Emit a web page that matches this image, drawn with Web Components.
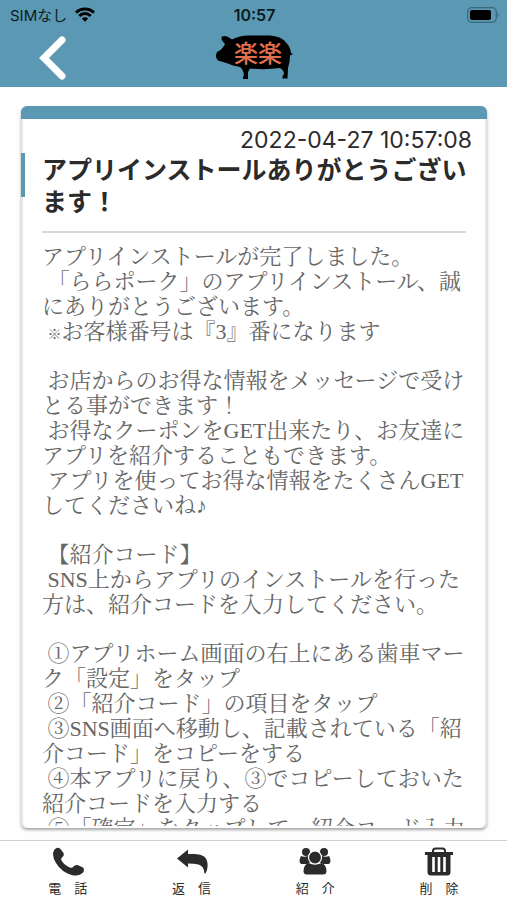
<!DOCTYPE html>
<html lang="ja">
<head>
<meta charset="utf-8">
<meta name="viewport" content="width=device-width, initial-scale=1">
<title>楽楽</title>
<style>
    body {
        margin: 0;
        background: #fefefe;
        color: #2b2b2b;
        font-family: Inter, "Noto Sans CJK JP", sans-serif;
    }

    small {
        font-size: 14px;
        line-height: 1;
    }
</style>
</head>
<body>
<app-shell>
    <status-bar slot="top" carrier="SIMなし" time="10:57"></status-bar>
    <app-bar slot="top" name="楽楽"></app-bar>
    <message-card date="2022-04-27 10:57:08">
        <span slot="title">アプリインストールありがとうございます！</span>
        <p class="joined">アプリインストールが完了しました。
 「ららポーク」のアプリインストール、誠にありがとうございます。</p>
        <p> <small>※</small>お客様番号は『3』番になります</p>
        <p> お店からのお得な情報をメッセージで受けとる事ができます！
 お得なクーポンをGET出来たり、お友達にアプリを紹介することもできます。
 アプリを使ってお得な情報をたくさんGETしてくださいね♪</p>
        <p> 【紹介コード】
 SNS上からアプリのインストールを行った方は、紹介コードを入力してください。</p>
        <p> ①アプリホーム画面の右上にある歯車マーク「設定」をタップ
 ②「紹介コード」の項目をタップ
 ③SNS画面へ移動し、記載されている「紹介コード」をコピーをする
 ④本アプリに戻り、③でコピーしておいた紹介コードを入力する
 ⑤「確定」をタップして、紹介コード入力</p>
    </message-card>
    <tab-bar slot="bottom">
        <tab-item icon="phone">電　話</tab-item>
        <tab-item icon="reply">返　信</tab-item>
        <tab-item icon="group">紹　介</tab-item>
        <tab-item icon="trash">削　除</tab-item>
    </tab-bar>
</app-shell>

<script>
class AppShell extends HTMLElement {
    constructor() {
        super();
        this.attachShadow({ mode: 'open' });
        this.shadowRoot.innerHTML = `
            <style>
                :host {
                    display: flex;
                    flex-direction: column;
                    height: 100vh;
                }

                header {
                    background: #5a98b4;
                }

                main {
                    flex: 1;
                    min-height: 0;
                    display: flex;
                    padding: 19px 20px 12px 21px;
                }
            </style>

            <header><slot name="top"></slot></header>
            <main><slot></slot></main>
            <slot name="bottom"></slot>
        `;
    }
}

class StatusBar extends HTMLElement {
    constructor() {
        super();
        this.attachShadow({ mode: 'open' });
        this.shadowRoot.innerHTML = `
            <style>
                :host {
                    display: grid;
                    grid-template-columns: 1fr auto 1fr;
                    align-items: center;
                    height: 29px;
                    padding: 0 8px 0 10px;
                    font-size: 15px;
                    color: #0d1a20;
                }

                #carrier {
                    display: flex;
                    align-items: center;
                    gap: 8px;
                }

                #time {
                    font-size: 16px;
                    font-weight: 600;
                }

                #battery {
                    justify-self: end;
                }

                svg {
                    display: block;
                }
            </style>

            <div id="carrier">
                <span></span>
                <svg width="20" height="15" viewBox="0 0 20 15" fill="none" stroke="#000" stroke-width="3">
                    <path d="M1 5.600a12.800 12.800 0 0 1 18 0M4.300 9a8 8 0 0 1 11.400 0"/>
                    <path d="M10 14.800l-3.200-3.300a4.600 4.600 0 0 1 6.400 0z" fill="#000" stroke="none"/>
                </svg>
            </div>
            <span id="time"></span>
            <svg id="battery" width="32" height="16" viewBox="0 0 32 16">
                <rect x="0.700" y="0.700" width="28.600" height="14.600" rx="4" fill="none" stroke="#3a687d" stroke-width="1.200"/>
                <rect x="3" y="3" width="21" height="10" rx="2" fill="#000"/>
                <path d="M30.500 5.500q2.500 2.500 0 5z" fill="#3a687d"/>
            </svg>
        `;
    }

    connectedCallback() {
        this.shadowRoot.querySelector('#carrier span').textContent = this.getAttribute('carrier');
        this.shadowRoot.querySelector('#time').textContent = this.getAttribute('time');
    }
}

class AppBar extends HTMLElement {
    constructor() {
        super();
        this.attachShadow({ mode: 'open' });
        this.shadowRoot.innerHTML = `
            <style>
                :host {
                    display: grid;
                    grid-template-columns: 1fr auto 1fr;
                    align-items: center;
                    height: 58px;
                }

                button {
                    justify-self: start;
                    margin-left: 36px;
                    padding: 0;
                    border: 0;
                    background: none;
                    cursor: pointer;
                }

                svg {
                    display: block;
                }

                #logo text {
                    font: 500 24px "Noto Sans CJK JP", sans-serif;
                    fill: #e0704e;
                }
            </style>

            <button aria-label="戻る">
                <svg width="34" height="50" viewBox="0 0 34 50" fill="none" stroke="#fff" stroke-width="7">
                    <path d="M26 7L8 25l18 18" stroke-linecap="round"/>
                </svg>
            </button>
            <svg id="logo" width="80" height="46" viewBox="0 0 80 46" role="img">
                <path d="M8 1.500Q12 0 15 2.500L18 4.500Q26 0.500 34 0.500H56Q67 1 72 7.500Q76 11 77 18L79 19L76 20.500Q76 27 74 33L73.500 43.500H68.500V41L70 39Q70 35 66 33Q52 35 36 33.500L34 37V44H29V42L30 40Q29 34 26 32L19 30.500Q14 28 9 27L4 25.500Q1.500 23 2 20L3 17Q9 14 11 9L8 5.500Q7 3 8 1.500z"/>
                <text x="20" y="27"></text>
            </svg>
        `;
    }

    connectedCallback() {
        this.shadowRoot.querySelector('text').textContent = this.getAttribute('name');
    }
}

class MessageCard extends HTMLElement {
    constructor() {
        super();
        this.attachShadow({ mode: 'open' });
        this.shadowRoot.innerHTML = `
            <style>
                :host {
                    flex: 1;
                    min-width: 0;
                }

                article {
                    box-sizing: border-box;
                    height: 100%;
                    display: flex;
                    flex-direction: column;
                    overflow: hidden;
                    border-top: 13px solid #5a98b4;
                    border-radius: 6px;
                    background: #fff;
                    box-shadow: inset 2px 0 #e6e6e6, inset -2px 0 #e6e6e6, 0 2px 3px rgba(0,0,0,0.35);
                }

                time {
                    padding: 9px 15px 0 0;
                    font-size: 23px;
                    line-height: 25px;
                    text-align: right;
                }

                #heading {
                    display: flex;
                    align-items: flex-start;
                    gap: 17px;
                    padding-right: 18px;
                }

                #mark {
                    flex: none;
                    width: 4px;
                    height: 44px;
                    background: #5a98b4;
                }

                h1 {
                    margin: 1px 0 0;
                    font-size: 25px;
                    line-height: 32px;
                    font-weight: 700;
                }

                hr {
                    align-self: stretch;
                    margin: 13px 21px 0;
                    border: 0;
                    border-top: 2px solid #d8d8d8;
                }

                #text {
                    flex: 1;
                    min-height: 0;
                    overflow-y: auto;
                    scrollbar-width: none;
                    margin: 0 20px 2px 21px;
                    padding-top: 11px;
                    color: #666;
                    font-family: "Liberation Serif", "Noto Serif CJK JP", "Noto Sans CJK JP", serif;
                    font-size: 22px;
                    line-height: 25px;
                }

                ::slotted(p) {
                    margin: 0 0 24px;
                    white-space: pre-wrap;
                }

                ::slotted(p.joined) {
                    margin-bottom: 0;
                }
            </style>

            <article>
                <time></time>
                <div id="heading">
                    <span id="mark"></span>
                    <h1><slot name="title"></slot></h1>
                </div>
                <hr>
                <div id="text"><slot></slot></div>
            </article>
        `;
    }

    connectedCallback() {
        this.shadowRoot.querySelector('time').textContent = this.getAttribute('date');
    }
}

class TabBar extends HTMLElement {
    constructor() {
        super();
        this.attachShadow({ mode: 'open' });
        this.shadowRoot.innerHTML = `
            <style>
                :host {
                    display: block;
                    border-top: 1px solid #d0d0d0;
                }

                nav {
                    display: flex;
                    padding: 6px 6px 4px;
                }
            </style>

            <nav><slot></slot></nav>
        `;
    }
}

const icons = {
    phone: '<path d="M2.500 2.500Q5.500 -0.500 8.500 2L11.500 6Q12.500 8.500 10.500 10Q8.500 11.500 9.500 13.500Q12.500 18.500 18 20.500Q20 21.500 21.500 19.500Q23 17.500 25.500 18L31 20.500Q32.500 22 31.500 25Q27 30 19.500 28Q9.500 25 4 16Q-1 8 2.500 2.500z"/>',
    reply: '<path d="M1 11.500L12 2.500V7H19Q31 7.500 31.500 16Q32 22 29.500 26.500H28.500Q28 19 22.500 17.500Q18 16.500 12 16.500V20.500z"/>',
    group: '<circle cx="7" cy="5" r="4"/><circle cx="25" cy="5" r="4"/><path d="M2 9Q5 10.500 9 9L12 15L8 17H2Q-1 14 2 9zM30 9Q27 10.500 23 9L20 15L24 17H30Q33 14 30 9z"/><path d="M9.500 16Q16 19 22.500 16Q27 17 27.500 24Q27.500 27.500 24 27.500H8Q4.500 27.500 4.500 24Q5 17 9.500 16z"/><circle cx="16" cy="10.500" r="6.500" stroke="#fff" stroke-width="1.200"/>',
    trash: '<path d="M10 6V4Q10 1.500 12.500 1.500H19.500Q22 1.500 22 4V6" fill="none" stroke="currentColor" stroke-width="2"/><path d="M2 5H30V8H27.500V25Q27.500 28.500 24 28.500H8Q4.500 28.500 4.500 25V8H2z"/><path d="M10.500 10V25M16 10V25M21.500 10V25" stroke="#fff" stroke-width="2.600"/>'
};

class TabItem extends HTMLElement {
    constructor() {
        super();
        this.attachShadow({ mode: 'open' });
        this.shadowRoot.innerHTML = `
            <style>
                :host {
                    flex: 1;
                    display: flex;
                    justify-content: center;
                }

                button {
                    display: flex;
                    flex-direction: column;
                    align-items: center;
                    gap: 4px;
                    padding: 0;
                    border: 0;
                    background: none;
                    color: #2b2b2b;
                    font: 400 13px/16px "Noto Sans CJK JP", sans-serif;
                    cursor: pointer;
                }

                svg {
                    display: block;
                    fill: currentColor;
                }
            </style>

            <button>
                <svg width="32" height="29" viewBox="0 0 32 29"></svg>
                <slot></slot>
            </button>
        `;
    }

    connectedCallback() {
        this.shadowRoot.querySelector('svg').innerHTML = icons[this.getAttribute('icon')];
    }
}

customElements.define('app-shell', AppShell);
customElements.define('status-bar', StatusBar);
customElements.define('app-bar', AppBar);
customElements.define('message-card', MessageCard);
customElements.define('tab-bar', TabBar);
customElements.define('tab-item', TabItem);
</script>
</body>
</html>
